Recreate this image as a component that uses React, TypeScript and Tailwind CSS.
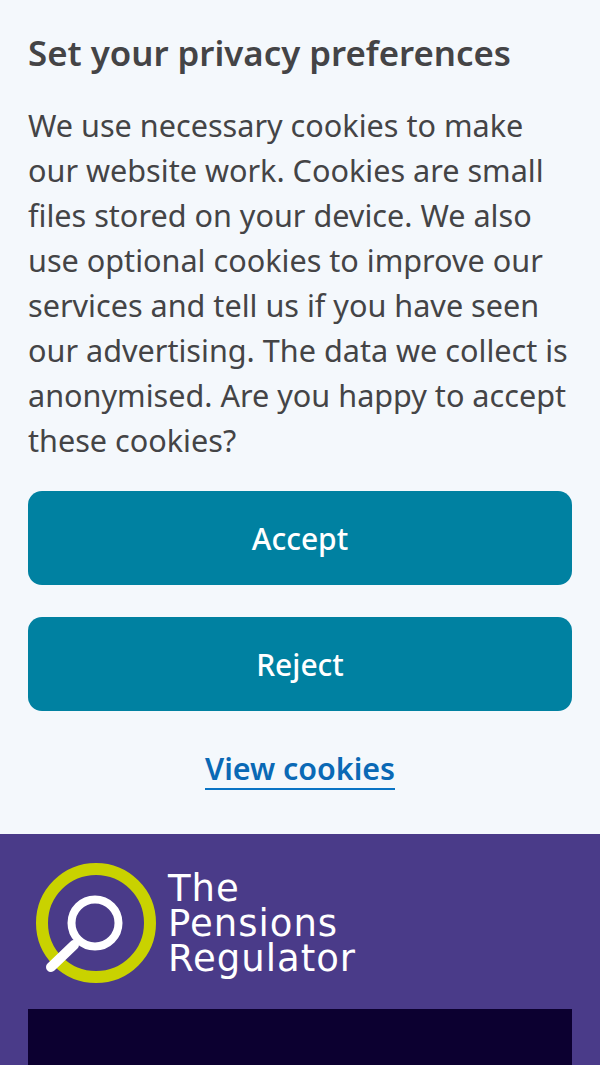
export default function App() {
  return (
    <div className="h-[1065px] w-[600px] overflow-hidden bg-[#f4f8fc] font-['Noto_Sans',sans-serif]">
      <div className="flex h-[834px] flex-col px-7 pt-[30px]">
        <h2 className="text-[34.8px] leading-[45px] font-semibold text-[#444446]">
          Set your privacy preferences
        </h2>
        <p className="mt-[28px] text-[30.6px] leading-[45px] text-[#444446]">
          We use necessary cookies to make our website work. Cookies are small files stored on your
          device. We also use optional cookies to improve our services and tell us if you have seen
          our advertising. The data we collect is anonymised. Are you happy to accept these cookies?
        </p>
        <button className="mt-[28px] h-[94px] w-full rounded-[14px] bg-[#0081a1] text-[30px] font-medium text-white">
          Accept
        </button>
        <button className="mt-8 h-[94px] w-full rounded-[14px] bg-[#0081a1] text-[30px] font-medium text-white">
          Reject
        </button>
        <div className="mt-[38px] flex justify-center">
          <a className="border-b-2 border-[#0a74c4] text-[30.4px] leading-[39px] font-semibold text-[#0a69b5]">
            View cookies
          </a>
        </div>
      </div>
      <div className="h-[231px] bg-[#4a3b89] px-7 pt-7">
        <div className="flex h-[147px] items-start">
          <svg width="124" height="124" viewBox="0 0 124 124" className="ml-[6px] shrink-0">
            <circle cx="62" cy="61" r="54" fill="none" stroke="#c9d200" strokeWidth="12" />
            <circle cx="61" cy="61" r="23.5" fill="none" stroke="#ffffff" strokeWidth="8" />
            <path d="M40 83 L17 105" stroke="#ffffff" strokeWidth="10" strokeLinecap="round" />
          </svg>
          <div className="mt-[9px] ml-[10px] font-['DejaVu_Sans',sans-serif] text-[37px] leading-[35px] font-normal tracking-[1px] text-white">
            <div>The</div>
            <div>Pensions</div>
            <div>Regulator</div>
          </div>
        </div>
        <div className="h-14 bg-[#0c0030]" />
      </div>
    </div>
  );
}
